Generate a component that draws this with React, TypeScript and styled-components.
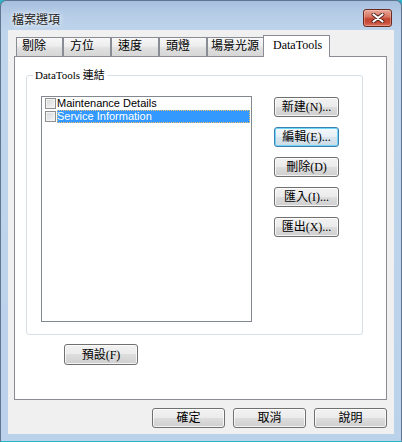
import React from "react";
import styled, { createGlobalStyle, css } from "styled-components";

const GlobalStyle = createGlobalStyle`
  html, body { margin: 0; padding: 0; }
  body {
    width: 402px;
    height: 442px;
    overflow: hidden;
    background: #2bb5c8;
    font-family: "Liberation Serif", "Noto Sans CJK TC", serif;
  }
  * { box-sizing: border-box; }
`;

const UI_FONT = `"Liberation Serif", "Noto Sans CJK TC", serif`;

const Window = styled.div`
  width: 402px;
  height: 442px;
  display: flex;
  flex-direction: column;
  border: 1px solid #5f7590;
  border-bottom: 1px solid #25b7c9;
  border-radius: 6px 6px 0 0;
  padding: 0 7px 7px 7px;
  background: linear-gradient(180deg, #a7c0de 0px, #b6cde7 14px, #bfd5ec 30px, #bad2ea 100%);
`;

const TitleBar = styled.div`
  height: 29px;
  display: flex;
  align-items: flex-start;
  justify-content: space-between;
  padding: 0 2px 0 4px;
`;

const Title = styled.div`
  margin-top: 11px;
  font-family: "Noto Sans CJK TC", sans-serif;
  font-size: 12px;
  line-height: 14px;
  color: #1b1b1b;
  text-shadow: 0 0 6px rgba(255, 255, 255, 0.95), 0 0 3px rgba(255, 255, 255, 0.9);
`;

const CloseButton = styled.div`
  margin-top: 8px;
  width: 29px;
  height: 18px;
  border: 1px solid #6b2a20;
  border-radius: 3px;
  background: linear-gradient(180deg, #e9a999 0%, #d77563 42%, #c3432f 56%, #c9503b 80%, #d9735f 100%);
  box-shadow: inset 0 0 0 1px rgba(255, 220, 210, 0.35);
  display: flex;
  align-items: center;
  justify-content: center;
`;

const Client = styled.div`
  flex: 1;
  background: #f0f0f0;
  display: flex;
  flex-direction: column;
  padding: 5px 7px 6px 6px;
`;

const TabStrip = styled.div`
  height: 21px;
  display: flex;
  align-items: flex-end;
  padding-left: 2px;
`;

const Tab = styled.div<{ $w: number; $pad: number; $active?: boolean }>`
  width: ${(p) => p.$w}px;
  height: 19px;
  border: 1px solid #898c95;
  border-bottom: 0;
  padding-left: ${(p) => p.$pad}px;
  font-family: ${UI_FONT};
  font-size: 12px;
  line-height: 17px;
  color: #000;
  white-space: nowrap;
  background: linear-gradient(180deg, #f7f7f7 0%, #ededed 45%, #e0e0e0 55%, #d6d6d6 100%);
  ${(p) =>
    p.$active &&
    css`
      height: 22px;
      margin-left: -2px;
      margin-bottom: -1px;
      position: relative;
      z-index: 1;
      background: #fff;
      line-height: 19px;
    `}
`;

const Panel = styled.div`
  width: 373px;
  height: 344px;
  border: 1px solid #898c95;
  background: #fff;
  display: flex;
  flex-direction: column;
  padding: 0;
`;

const GroupBox = styled.fieldset`
  margin: 12px 0 0 11px;
  width: 337px;
  height: 266px;
  min-width: 0;
  border: 1px solid #d5dfe5;
  border-radius: 3px;
  padding: 14px 0 0 14px;
`;

const Legend = styled.legend`
  margin-left: -8px;
  padding: 0 2px;
  font-family: ${UI_FONT};
  font-size: 11px;
  line-height: 13px;
  color: #000;
`;

const GroupContent = styled.div`
  display: flex;
  gap: 22px;
`;

const ListBox = styled.div`
  width: 211px;
  height: 226px;
  border: 1px solid #828790;
  background: #fff;
  display: flex;
  flex-direction: column;
`;

const ListRow = styled.div`
  height: 13px;
  display: flex;
  align-items: center;
  padding-left: 3px;
`;

const CheckBox = styled.span`
  width: 11px;
  height: 11px;
  flex: none;
  border: 1px solid #8f8f8f;
  background: linear-gradient(135deg, #d4d6d9 0%, #e9eaec 60%, #f6f6f6 100%);
  box-shadow: inset 0 0 0 1px #f4f4f4;
`;

const ItemText = styled.span<{ $selected?: boolean }>`
  flex: 1;
  margin-left: 1px;
  margin-right: 1px;
  height: 13px;
  font-family: "Liberation Sans", "DejaVu Sans", sans-serif;
  font-size: 11px;
  line-height: 13px;
  color: #000;
  white-space: nowrap;
  ${(p) =>
    p.$selected &&
    css`
      background: #3399ff;
      color: #fff;
      outline: 1px dotted #f6c27a;
      outline-offset: -1px;
    `}
`;

const ButtonColumn = styled.div`
  display: flex;
  flex-direction: column;
  gap: 10px;
  margin-top: 1px;
`;

const Button = styled.button<{ $w: number; $h?: number; $default?: boolean }>`
  width: ${(p) => p.$w}px;
  height: ${(p) => p.$h ?? 20}px;
  padding: 0;
  margin: 0;
  border: 1px solid #707070;
  border-radius: 3px;
  font-family: ${UI_FONT};
  font-size: 12px;
  line-height: 14px;
  color: #000;
  background: linear-gradient(180deg, #f2f2f2 0%, #ebebeb 50%, #dddddd 50%, #cfcfcf 100%);
  box-shadow: inset 0 0 0 1px rgba(255, 255, 255, 0.75);
  white-space: nowrap;
  ${(p) =>
    p.$default &&
    css`
      border-color: #3c7fb1;
      background: linear-gradient(180deg, #f3f8fb 0%, #e7eff5 50%, #d8e5ee 50%, #cddbe6 100%);
      box-shadow: inset 0 0 0 1px #6fd6f8;
    `}
`;

const DefaultsRow = styled.div`
  margin: 9px 0 0 49px;
`;

const BottomRow = styled.div`
  margin-top: 8px;
  display: flex;
  justify-content: flex-end;
  gap: 8px;
`;

const CloseIcon = () => (
  <svg width="14" height="10" viewBox="0 0 14 10">
    <path d="M2.5 1.5 L11.5 8.5 M11.5 1.5 L2.5 8.5" stroke="#4a1d17" strokeWidth="3.8" strokeLinecap="round" />
    <path d="M2.5 1.5 L11.5 8.5 M11.5 1.5 L2.5 8.5" stroke="#ffffff" strokeWidth="2.2" strokeLinecap="round" />
  </svg>
);

const tabs = [
  { label: "剔除", w: 47, pad: 5 },
  { label: "方位", w: 48, pad: 6 },
  { label: "速度", w: 48, pad: 6 },
  { label: "頭燈", w: 48, pad: 6 },
  { label: "場景光源", w: 58, pad: 3 },
];

const items = [
  { label: "Maintenance Details", selected: false },
  { label: "Service Information", selected: true },
];

const sideButtons = [
  { label: "新建(N)...", def: false },
  { label: "編輯(E)...", def: true },
  { label: "刪除(D)", def: false },
  { label: "匯入(I)...", def: false },
  { label: "匯出(X)...", def: false },
];

export default function App() {
  return (
    <>
      <GlobalStyle />
      <Window>
        <TitleBar>
          <Title>檔案選項</Title>
          <CloseButton>
            <CloseIcon />
          </CloseButton>
        </TitleBar>
        <Client>
          <TabStrip>
            {tabs.map((t) => (
              <Tab key={t.label} $w={t.w} $pad={t.pad}>
                {t.label}
              </Tab>
            ))}
            <Tab $w={67} $pad={9} $active>
              DataTools
            </Tab>
          </TabStrip>
          <Panel>
            <GroupBox>
              <Legend>DataTools 連結</Legend>
              <GroupContent>
                <ListBox>
                  {items.map((it) => (
                    <ListRow key={it.label}>
                      <CheckBox />
                      <ItemText $selected={it.selected}>{it.label}</ItemText>
                    </ListRow>
                  ))}
                </ListBox>
                <ButtonColumn>
                  {sideButtons.map((b) => (
                    <Button key={b.label} $w={65} $default={b.def}>
                      {b.label}
                    </Button>
                  ))}
                </ButtonColumn>
              </GroupContent>
            </GroupBox>
            <DefaultsRow>
              <Button $w={74} $h={21}>
                預設(F)
              </Button>
            </DefaultsRow>
          </Panel>
          <BottomRow>
            <Button $w={73}>確定</Button>
            <Button $w={73}>取消</Button>
            <Button $w={73}>說明</Button>
          </BottomRow>
        </Client>
      </Window>
    </>
  );
}
